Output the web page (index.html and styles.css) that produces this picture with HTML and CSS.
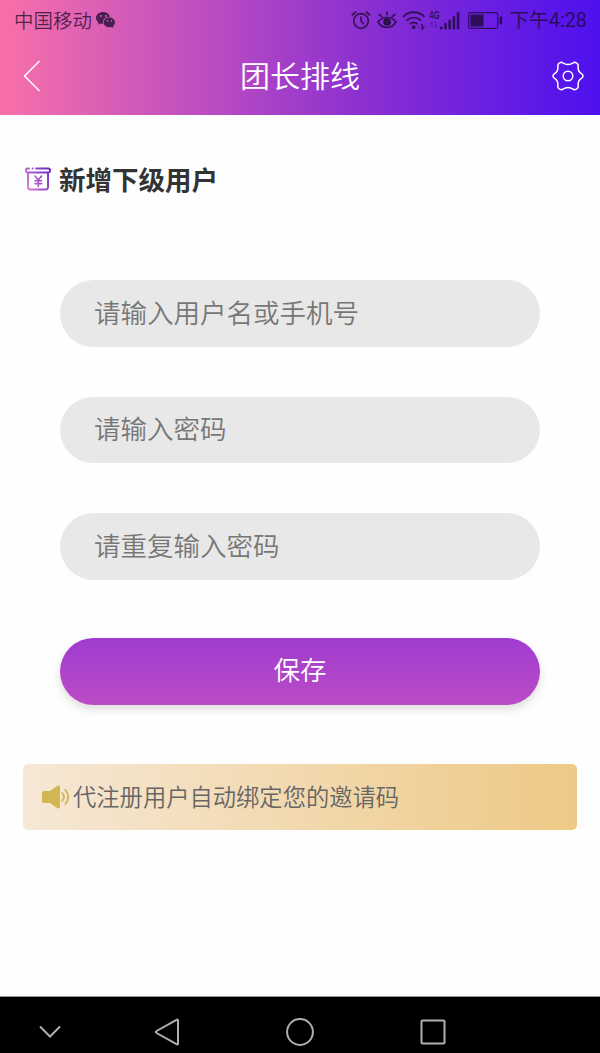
FILE: index.html
```html
<!DOCTYPE html>
<html lang="zh-CN">
<head>
  <meta charset="UTF-8">
  <title>团长排线</title>
  <link rel="stylesheet" href="styles.css">
</head>
<body>
  <header>
    <!-- Status bar -->
    <div class="status-bar">
      <span class="carrier">中国移动</span>
      <svg class="wechat" width="20" height="18" viewBox="0 0 20 18">
        <path fill="currentColor" fill-rule="evenodd" d="M7.2 1C3.2 1 0 3.6 0 7c0 1.900 1 3.500 2.600 4.600L2 13.800l2.600-1.300c.8.300 1.700.4 2.600.4-1.300-4 2-7.300 6.700-7.200C13.200 3 10.500 1 7.200 1zM4.800 4a1 1 0 1 1 0 2 1 1 0 0 1 0-2zm5 0a1 1 0 1 1 0 2 1 1 0 0 1 0-2z"/>
        <path fill="currentColor" fill-rule="evenodd" d="M13.400 6.600c-3.200 0-5.700 2.100-5.700 4.800s2.500 4.800 5.700 4.800c.7 0 1.300-.1 1.900-.3l2.100 1.100-.5-1.900c1.300-.9 2.100-2.200 2.100-3.700 0-2.700-2.500-4.800-5.600-4.800zm-2 2.500a.8.8 0 1 1 0 1.600.8.8 0 0 1 0-1.600zm4 0a.8.8 0 1 1 0 1.600.8.8 0 0 1 0-1.600z"/>
      </svg>
      <div class="status-icons">
        <svg class="alarm" width="20" height="20" viewBox="0 0 20 20" fill="none" stroke="currentColor" stroke-width="1.700" stroke-linecap="round">
          <circle cx="10" cy="11" r="7.300"/>
          <path d="M10 7v4l2.500 2.600M1.300 5l3.400-3M18.700 5l-3.400-3"/>
        </svg>
        <svg class="eye" width="20" height="20" viewBox="0 0 20 20" fill="none" stroke="currentColor" stroke-width="1.700" stroke-linecap="round">
          <path d="M1 12c4.500-6 13.500-6 18 0-4.500 7.300-13.500 7.300-18 0zM10 5V2M4.700 6.500L2 4.500M15.300 6.500L18 4.500"/>
          <circle cx="10" cy="12" r="3" fill="currentColor"/>
        </svg>
        <svg class="wifi" width="24" height="20" viewBox="0 0 24 20" fill="none" stroke="currentColor" stroke-width="1.900">
          <path d="M1 6.800c6-6 15.500-6 21.500 0M4.500 10.600c4.500-4 10-4 14.500 0M8 14c2.500-2 5-2 7.500 0"/>
          <circle cx="11.700" cy="17.200" r="1.900" fill="currentColor" stroke="none"/>
          <path d="M16.500 15v4" stroke-width="1" opacity=".4"/>
          <path d="M20 14v5l2.500-2.500" stroke-width="1.400"/>
        </svg>
        <div class="network">
          <span>4G</span>
          <svg width="10" height="7" viewBox="0 0 10 7" fill="none" stroke="currentColor" opacity=".4">
            <path d="M3 6.500v-6L1 3M6.500.5v6l2-2.500"/>
          </svg>
        </div>
        <svg class="signal" width="20" height="19" viewBox="0 0 20 19" fill="currentColor">
          <rect x="0" y="15.500" width="2.600" height="3" rx="1"/>
          <rect x="4.200" y="12" width="2.600" height="6.500" rx="1"/>
          <rect x="8.400" y="8.500" width="2.600" height="10" rx="1"/>
          <rect x="12.600" y="5" width="2.600" height="13.500" rx="1"/>
          <rect x="16.800" y="1" width="2.600" height="17.500" rx="1"/>
        </svg>
        <svg class="battery" width="35" height="17" viewBox="0 0 35 17" fill="currentColor">
          <rect x=".7" y=".7" width="29" height="15.600" rx="1.500" fill="none" stroke="currentColor" stroke-width="1.200"/>
          <rect x="2.500" y="2.500" width="13" height="12"/>
          <rect x="31.500" y="4.500" width="2.600" height="8" rx="1"/>
        </svg>
        <span class="time">下午4:28</span>
      </div>
    </div>

    <!-- Title bar -->
    <div class="title-bar">
      <svg width="18" height="32" viewBox="0 0 18 32" fill="none" stroke="#fff" stroke-width="1.500">
        <path d="M16.500 1L1.500 16l15 15"/>
      </svg>
      <h1>团长排线</h1>
      <svg width="32" height="30" viewBox="0 0 32 30" fill="none" stroke="#fff" stroke-width="1.500" stroke-linejoin="round">
        <path d="M8.200 1.700Q9.500.9 10.800 1.900Q16 5.200 21.200 1.900Q22.500.9 23.800 1.700L25.500 2.900Q26.500 3.700 26.100 5.500Q25.800 10.800 29.500 12.700Q31 13.700 31 15Q31 16.300 29.500 17.300Q25.800 19.200 26.100 24.500Q26.500 26.300 25.500 27.100L23.800 28.300Q22.500 29.100 21.200 28.100Q16 24.800 10.800 28.100Q9.500 29.100 8.200 28.300L6.500 27.100Q5.500 26.300 5.900 24.500Q6.200 19.200 2.500 17.300Q1 16.300 1 15Q1 13.700 2.500 12.700Q6.200 10.800 5.900 5.500Q5.500 3.700 6.500 2.900Z"/>
        <circle cx="16" cy="15" r="4.800"/>
      </svg>
    </div>
  </header>

  <main>
    <h2>
      <svg width="26" height="24" viewBox="0 0 26 24" fill="none" stroke="url(#purple)" stroke-width="1.900" stroke-linecap="round" stroke-linejoin="round">
        <defs>
          <linearGradient id="purple" gradientUnits="userSpaceOnUse" x1="0" y1="18" x2="26" y2="4">
            <stop offset="0" stop-color="#dc7bce"/>
            <stop offset="1" stop-color="#6426c8"/>
          </linearGradient>
        </defs>
        <path d="M4 1.500H2.500Q1 1.500 1 3v1q0 1.500 1.500 1.500h21Q25 5.500 25 4V3q0-1.500-1.500-1.500H11M7.500 1.500h.2M3 5.500V20q0 2.500 2.500 2.500h15q2.500 0 2.500-2.500V5.500"/>
        <path d="M10 9l3.300 4 3.300-4M13.300 13v6.500M10 13.800h6.600M10 16.600h6.600" stroke-width="1.600"/>
      </svg>
      新增下级用户
    </h2>

    <form>
      <input type="text" placeholder="请输入用户名或手机号">
      <input type="password" placeholder="请输入密码">
      <input type="password" placeholder="请重复输入密码">
      <button type="button">保存</button>
    </form>

    <div class="notice">
      <svg width="29" height="24" viewBox="0 0 29 24" fill="#d1b653">
        <path d="M2.500 6H8l7.500-5.300Q18 0 18 2v20q0 2-2.500 1.300L8 18H2.500Q0 18 0 15.500v-7Q0 6 2.500 6z"/>
        <path d="M20.300 8q3.200 4 0 8M23.300 5q6 7 0 14" fill="none" stroke="#d1b653" stroke-width="1.900" stroke-linecap="round"/>
      </svg>
      <span>代注册用户自动绑定您的邀请码</span>
    </div>
  </main>

  <!-- System navigation -->
  <nav>
    <svg width="22" height="13" viewBox="0 0 22 13">
      <path d="M1 1.500L11 11.500l10-10"/>
    </svg>
    <svg class="back" width="26" height="28" viewBox="0 0 26 28">
      <path d="M24 2.500v23q0 1.500-1.500.7L2.600 15q-1.500-1 0-2L22.500 1.800Q24 1 24 2.500z"/>
    </svg>
    <svg class="home" width="28" height="28" viewBox="0 0 28 28">
      <circle cx="14" cy="14" r="12.900"/>
    </svg>
    <svg class="recent" width="26" height="26" viewBox="0 0 26 26">
      <rect x="1.500" y="1.500" width="23" height="23" rx="1"/>
    </svg>
  </nav>
</body>
</html>
```
FILE: styles.css
```css
* {
  box-sizing: border-box;
  font-family: "Noto Sans CJK SC", sans-serif;
}

body {
  margin: 0;
  height: 1053px;
  display: flex;
  flex-direction: column;
  background-color: #fefefe;
  color: #333;
  font-weight: 350;
}

header {
  height: 115px;
  background: linear-gradient(to right, #f870a9 0%, #bb4dc1 35%, #8c30d0 60%, #4d10ef 100%);
}

.status-bar {
  height: 40px;
  padding: 0 13px 0 14px;
  display: flex;
  align-items: center;
  color: rgba(25, 10, 45, 0.75);
  font-size: 19.5px;
  line-height: 40px;
}

.wechat {
  margin-left: 4px;
}

.status-icons {
  margin-left: auto;
  display: flex;
  align-items: center;
}

.eye {
  margin-left: 6px;
}

.wifi {
  margin-left: 5px;
}

.network {
  width: 12px;
  height: 20px;
  margin-left: 3px;
  display: flex;
  flex-direction: column;
  font-size: 10px;
  font-weight: bold;
  line-height: 11px;
}

.network span {
  font-family: "Liberation Sans", sans-serif;
  transform: scaleX(0.8);
  transform-origin: left;
}

.signal {
  margin-left: -1px;
}

.battery {
  margin-left: 8px;
}

.time {
  margin-left: 6px;
  padding-top: 1px;
  font-family: Roboto, "Noto Sans CJK SC", sans-serif;
  font-size: 19.800px;
  font-weight: normal;
}

.title-bar {
  height: 71px;
  padding: 0 16px 0 23px;
  display: flex;
  align-items: center;
  justify-content: space-between;
}

h1 {
  margin: 0;
  padding: 0 0 3px 7px;
  color: #fff;
  font-size: 30px;
  font-weight: 350;
  line-height: 68px;
}

main {
  flex: 1;
  padding: 44px 23px 0;
}

h2 {
  margin: 0;
  height: 40px;
  padding-left: 2px;
  display: flex;
  align-items: center;
  gap: 8px;
  font-size: 26.500px;
  line-height: 40px;
}

form {
  margin: 81px 37px 0;
  display: flex;
  flex-direction: column;
}

input {
  width: 100%;
  height: 66.500px;
  margin: 0 0 50px;
  padding: 0 34px 4px;
  border: none;
  border-radius: 34px;
  background-color: #e8e8e8;
  font-size: 26.500px;
  font-weight: 350;
}

input::placeholder {
  color: #777;
}

button {
  height: 67px;
  margin-top: 8px;
  padding: 0 0 5px;
  border: none;
  border-radius: 34px;
  background: linear-gradient(#a03bd0, #ba4cc5);
  box-shadow: 0 4px 10px rgba(0, 0, 0, 0.14);
  color: #fff;
  font-size: 26.500px;
  font-weight: 350;
}

.notice {
  height: 66px;
  margin-top: 59px;
  padding-left: 19px;
  display: flex;
  align-items: center;
  gap: 2px;
  border-radius: 5px;
  background: linear-gradient(to right, #f6e8d6, #eec986);
  color: #666;
  font-size: 23.300px;
}

.notice span {
  padding-bottom: 2px;
}

nav {
  height: 57px;
  padding: 13px 0 0 39px;
  display: flex;
  align-items: center;
  border-top: 1px solid #999;
  background-color: #000;
}

nav svg {
  fill: none;
  stroke: #b0b0b0;
  stroke-width: 2;
}

.back {
  margin-left: 93px;
}

.home {
  margin-left: 106px;
}

.recent {
  margin-left: 106px;
}
```
